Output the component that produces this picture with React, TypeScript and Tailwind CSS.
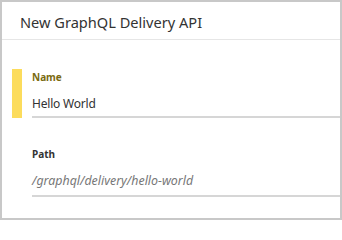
import React from 'react';

const font = { fontFamily: '"Noto Sans", "Open Sans", sans-serif' };

export default function App() {
  return (
    <div className="h-[220px] w-[342px] bg-white border-2 border-[#c8c8c8] flex flex-col" style={font}>
      {/* Header */}
      <div className="h-[38px] shrink-0 border-b border-[#e6e6e6] flex items-center pl-[18px]">
        <h1 className="text-[14.6px] text-[#333] leading-none pt-[3px]">New GraphQL Delivery API</h1>
      </div>

      {/* Fields */}
      <div className="flex flex-col pt-[29px]">
        {/* Name (focused) */}
        <div className="flex">
          <div className="w-[10px] ml-[10px] bg-[#fcdc5c] shrink-0" />
          <div className="flex-1 ml-[10px] pt-[2px] border-b-2 border-[#d6d6d6]">
            <label className="block text-[10px] font-bold text-[#7a6a10] leading-[13px]">Name</label>
            <div className="text-[12px] tracking-[-0.2px] text-[#333] leading-[16px] mt-[12px] pb-[4px]">Hello World</div>
          </div>
        </div>

        {/* Path */}
        <div className="flex mt-[30px]">
          <div className="w-[10px] ml-[10px] shrink-0" />
          <div className="flex-1 ml-[10px] border-b-2 border-[#d6d6d6]">
            <label className="block text-[10px] font-bold text-[#333] leading-[13px]">Path</label>
            <div className="text-[12.4px] italic text-[#777] leading-[16px] mt-[12px] pb-[6px]">/graphql/delivery/hello-world</div>
          </div>
        </div>
      </div>
    </div>
  );
}
